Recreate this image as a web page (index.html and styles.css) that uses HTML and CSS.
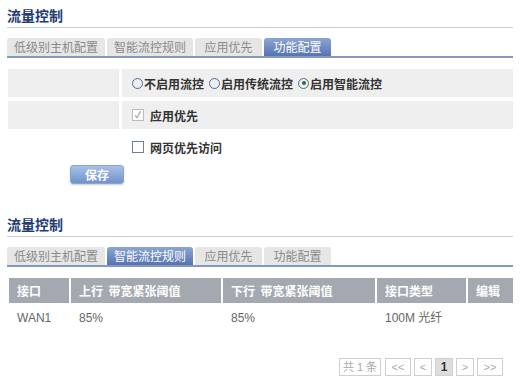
FILE: index.html
```html
<!DOCTYPE html>
<html lang="zh-CN">
<head>
    <meta charset="UTF-8">
    <title>流量控制</title>
    <link rel="stylesheet" href="styles.css">
</head>
<body>
    <div class="container">
        <div class="section">
            <h2 class="title">流量控制</h2>
            <div class="tabs">
                <span class="tab">低级别主机配置</span>
                <span class="tab">智能流控规则</span>
                <span class="tab">应用优先</span>
                <span class="tab active">功能配置</span>
            </div>

            <div class="form">
                <div class="form-row shaded">
                    <div class="label-cell"></div>
                    <div class="value-cell">
                        <label class="radio"><span class="dot"></span>不启用流控</label>
                        <label class="radio"><span class="dot"></span>启用传统流控</label>
                        <label class="radio"><span class="dot checked"></span>启用智能流控</label>
                    </div>
                </div>
                <div class="form-row shaded">
                    <div class="label-cell"></div>
                    <div class="value-cell">
                        <label class="check"><span class="box disabled">&#10003;</span>应用优先</label>
                    </div>
                </div>
                <div class="form-row">
                    <div class="label-cell"></div>
                    <div class="value-cell">
                        <label class="check"><span class="box"></span>网页优先访问</label>
                    </div>
                </div>
                <button class="save-btn">保存</button>
            </div>
        </div>

        <div class="section second">
            <h2 class="title">流量控制</h2>
            <div class="tabs">
                <span class="tab">低级别主机配置</span>
                <span class="tab active">智能流控规则</span>
                <span class="tab">应用优先</span>
                <span class="tab">功能配置</span>
            </div>

            <div class="rules">
                <div class="rules-head">
                    <div>接口</div>
                    <div>上行&nbsp; 带宽紧张阈值</div>
                    <div>下行&nbsp; 带宽紧张阈值</div>
                    <div>接口类型</div>
                    <div>编辑</div>
                </div>
                <div class="rules-row">
                    <div>WAN1</div>
                    <div>85%</div>
                    <div>85%</div>
                    <div>100M 光纤</div>
                    <div></div>
                </div>
            </div>

            <div class="pager">
                <span class="page-item total">共 1 条</span>
                <span class="page-item wide">&lt;&lt;</span>
                <span class="page-item">&lt;</span>
                <span class="page-item current">1</span>
                <span class="page-item">&gt;</span>
                <span class="page-item wide">&gt;&gt;</span>
            </div>
        </div>
    </div>
</body>
</html>
```

FILE: styles.css
```css
:root {
    --title-color: #1f3d74;
    --tab-line: #8498c0;
    --row-bg: #efefef;
    --head-bg: #a4a9b1;
}
body {
    margin: 0;
    background: #fff;
    font-family: "Noto Sans CJK SC", "Liberation Sans", sans-serif;
    font-size: 12px;
    color: #333;
}
.container {
    width: 506px;
    padding: 0 8px 0 7px;
}
.title {
    margin: 0;
    padding: 7px 0 4px;
    font-size: 14px;
    line-height: 16px;
    font-weight: bold;
    color: var(--title-color);
    border-bottom: 1px solid #ccd0d8;
}
.tabs {
    display: flex;
    gap: 2px;
    margin-top: 10px;
    border-bottom: 2px solid var(--tab-line);
}
.tab {
    min-width: 53px;
    height: 18px;
    line-height: 18px;
    padding: 0 7px;
    text-align: center;
    background: #e6e6e6;
    color: #8a8a8a;
    border-radius: 3px 3px 0 0;
}
.tab.active {
    background: linear-gradient(#8ca5d3, #5674b2);
    color: #fff;
}
.form {
    margin-top: 11px;
}
.form-row {
    display: grid;
    grid-template-columns: 111px 1fr;
    gap: 3px;
    height: 28px;
    margin-bottom: 4px;
    padding-left: 1px;
}
.form-row.shaded .label-cell,
.form-row.shaded .value-cell {
    background: var(--row-bg);
}
.value-cell {
    display: flex;
    align-items: center;
    padding-left: 10px;
    font-weight: bold;
}
.radio {
    display: flex;
    align-items: center;
    margin-right: 5px;
}
.dot {
    flex-shrink: 0;
    box-sizing: border-box;
    width: 11px;
    height: 11px;
    border: 1.5px solid #4c6c9c;
    border-radius: 50%;
    margin-right: 1px;
    display: flex;
    align-items: center;
    justify-content: center;
}
.dot.checked::after {
    content: "";
    width: 4px;
    height: 4px;
    border-radius: 50%;
    background: #2f6a3a;
}
.check {
    display: flex;
    align-items: center;
}
.box {
    flex-shrink: 0;
    width: 10px;
    height: 10px;
    border: 1px solid #6d7f99;
    background: #fff;
    margin-right: 6px;
    font-size: 9px;
    line-height: 10px;
    text-align: center;
    color: #9a9a9a;
}
.box.disabled {
    border-color: #bbb;
}
.save-btn {
    display: block;
    margin: 2px 0 0 63px;
    width: 54px;
    height: 19px;
    padding: 0;
    border: 1px solid #8aa6cf;
    border-radius: 3px;
    background: linear-gradient(#a8c1e6, #6f93cb);
    color: #fff;
    font-family: inherit;
    font-size: 12px;
    font-weight: bold;
    box-shadow: 0 1px 2px rgba(0, 0, 0, 0.2);
}
.second {
    margin-top: 25px;
}
.rules {
    margin-top: 11px;
    padding-left: 2px;
}
.rules-head,
.rules-row {
    display: grid;
    grid-template-columns: 60px 150px 152px 89px 1fr;
    column-gap: 2px;
}
.rules-head div {
    height: 25px;
    line-height: 25px;
    padding-left: 8px;
    background: var(--head-bg);
    color: #fff;
    font-weight: bold;
}
.rules-row div {
    height: 30px;
    line-height: 30px;
    padding-left: 8px;
    color: #666;
    font-family: "Liberation Sans", "Noto Sans CJK SC", sans-serif;
}
.pager {
    display: flex;
    justify-content: flex-end;
    gap: 3px;
    margin-top: 25px;
    padding-right: 10px;
}
.page-item {
    min-width: 14px;
    height: 16px;
    line-height: 16px;
    padding: 0 1px;
    border: 1px solid #d0d0d0;
    text-align: center;
    color: #aaa;
    font-family: "Liberation Sans", "Noto Sans CJK SC", sans-serif;
    font-size: 11px;
}
.page-item.total {
    width: 38px;
    margin-right: 1px;
}
.page-item.wide {
    width: 22px;
}
.page-item.current {
    background: #ddd;
    color: #333;
    font-weight: bold;
    font-size: 12px;
}
```
